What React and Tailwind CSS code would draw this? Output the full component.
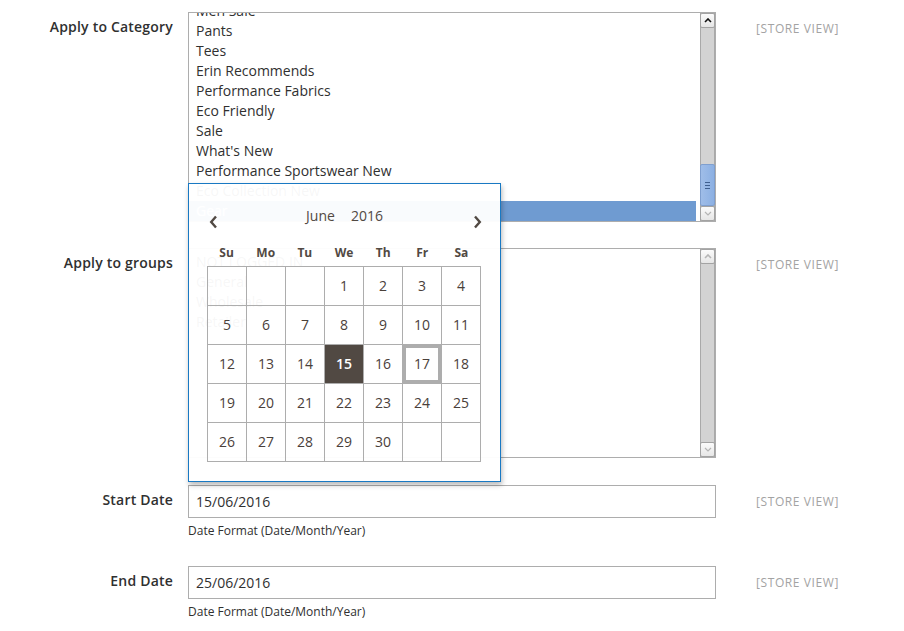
import React from 'react';

const font = { fontFamily: '"Open Sans", "DejaVu Sans", sans-serif' };

const categories = [
  'Men Sale',
  'Pants',
  'Tees',
  'Erin Recommends',
  'Performance Fabrics',
  'Eco Friendly',
  'Sale',
  "What's New",
  'Performance Sportswear New',
  'Eco Collection New',
];

const groups = ['NOT LOGGED IN', 'General', 'Wholesale', 'Retailer'];

const Chevron = ({ up, color }) => (
  <svg width="8" height="5" viewBox="0 0 8 5">
    <path d={up ? 'M1 4 L4 1 L7 4' : 'M1 1 L4 4 L7 1'} fill="none" stroke={color} strokeWidth={up ? 1.6 : 1.2} />
  </svg>
);

const ScrollBar = ({ active }) => (
  <div className="w-[15px] h-full flex flex-col bg-[#d3d3d3] border-x border-[#a9a9a9]">
    <div className="h-[15px] shrink-0 -mx-px rounded-[2px] border border-[#a3a3a3] bg-gradient-to-b from-[#fbfbfb] to-[#e6e6e6] flex items-center justify-center">
      <Chevron up color={active ? '#111' : '#b5b5b5'} />
    </div>
    <div className="flex-1" />
    {active && (
      <div className="h-[42px] shrink-0 -mx-px rounded-[2px] border border-[#7f9fcf] bg-gradient-to-r from-[#9fbde8] to-[#8cb0e3] flex flex-col items-center justify-center gap-[2px]">
        <div className="w-[5px] h-px bg-[#3f5f8f]" />
        <div className="w-[5px] h-px bg-[#3f5f8f]" />
        <div className="w-[5px] h-px bg-[#3f5f8f]" />
      </div>
    )}
    <div className="h-[15px] shrink-0 -mx-px rounded-[2px] border border-[#a3a3a3] bg-gradient-to-b from-[#fbfbfb] to-[#e6e6e6] flex items-center justify-center">
      <Chevron color="#b5b5b5" />
    </div>
  </div>
);

const StoreView = () => (
  <div className="ml-[40px] pt-[9px] text-[12px] leading-[16px] text-[#a3a3a3] tracking-[0.6px]">[STORE VIEW]</div>
);

const Label = ({ children }) => (
  <div className="w-[173px] shrink-0 text-right pt-[6px] text-[14px] leading-[18px] font-semibold tracking-[0.2px] text-[#303030]">
    {children}
  </div>
);

const Calendar = () => {
  const days = [null, null, null];
  for (let d = 1; d <= 30; d++) days.push(d);
  while (days.length < 35) days.push(null);
  return (
    <div className="absolute left-[188px] top-[183px] w-[313px] h-[299px] border border-[#1979c3] bg-white/[0.96] shadow-[1px_3px_5px_rgba(0,0,0,0.28)] z-10">
      <div className="relative h-[58px]">
        <div className="absolute left-[20px] top-[31px]">
          <svg width="9" height="14" viewBox="0 0 9 14">
            <path d="M7 1.5 L2.2 7 L7 12.5" fill="none" stroke="#514943" strokeWidth="2.4" />
          </svg>
        </div>
        <div className="absolute left-0 right-0 top-[22px] flex justify-center gap-[16px] text-[14px] leading-[20px] text-[#514943]">
          <span>June</span>
          <span>2016</span>
        </div>
        <div className="absolute left-[284px] top-[31px]">
          <svg width="9" height="14" viewBox="0 0 9 14">
            <path d="M2 1.5 L6.8 7 L2 12.5" fill="none" stroke="#514943" strokeWidth="2.4" />
          </svg>
        </div>
      </div>
      <div className="ml-[18px] w-[274px]">
        <div className="grid grid-cols-7 h-[24px] text-[12px] leading-[20px] font-bold text-[#514943] text-center">
          {['Su', 'Mo', 'Tu', 'We', 'Th', 'Fr', 'Sa'].map((d) => (
            <div key={d} className="pt-[1px]">{d}</div>
          ))}
        </div>
        <div className="grid grid-cols-7 border-l border-t border-[#adadad]">
          {days.map((d, i) => (
            <div
              key={i}
              className={
                'relative h-[39px] pb-[2px] border-r border-b border-[#adadad] flex items-center justify-center text-[14px] ' +
                (d === 15 ? 'bg-[#514943] text-white font-semibold' : 'text-[#4a403a]')
              }
            >
              {d === 17 && <div className="absolute inset-0 border-[3px] border-[#adadad]" />}
              {d && <span className="relative">{d}</span>}
            </div>
          ))}
        </div>
      </div>
    </div>
  );
};

export default function App() {
  return (
    <div className="relative w-[904px] h-[631px] bg-white overflow-hidden pt-[12px]" style={font}>
      {/* Apply to Category */}
      <div className="flex items-start">
        <Label>Apply to Category</Label>
        <div className="ml-[15px] w-[528px] h-[210px] border border-[#adadad] flex">
          <div className="flex-1 overflow-hidden">
            <div className="-mt-[12px] text-[14px] leading-[20px] text-[#303030]">
              {categories.map((c) => (
                <div key={c} className="pl-[7px] h-[20px]">{c}</div>
              ))}
              <div className="pl-[7px] h-[20px] bg-[#6f9bd1] text-white">Gear</div>
            </div>
          </div>
          <div className="w-[4px]" />
          <ScrollBar active />
        </div>
        <StoreView />
      </div>

      {/* Apply to groups */}
      <div className="flex items-start mt-[26px]">
        <Label>Apply to groups</Label>
        <div className="ml-[15px] w-[528px] h-[210px] border border-[#adadad] flex">
          <div className="flex-1 overflow-hidden pt-[3px] text-[14px] leading-[20px] text-[#303030]">
            {groups.map((g) => (
              <div key={g} className="pl-[7px] h-[20px]">{g}</div>
            ))}
          </div>
          <div className="w-[4px]" />
          <ScrollBar />
        </div>
        <StoreView />
      </div>

      {/* Start Date */}
      <div className="flex items-start mt-[27px]">
        <Label>Start Date</Label>
        <div className="ml-[15px] w-[528px]">
          <div className="h-[33px] border border-[#adadad] pl-[7px] flex items-center text-[14px] text-[#303030]">15/06/2016</div>
          <div className="mt-[4px] text-[12px] leading-[18px] text-[#303030]">Date Format (Date/Month/Year)</div>
        </div>
        <StoreView />
      </div>

      {/* End Date */}
      <div className="flex items-start mt-[26px]">
        <Label>End Date</Label>
        <div className="ml-[15px] w-[528px]">
          <div className="h-[33px] border border-[#adadad] pl-[7px] flex items-center text-[14px] text-[#303030]">25/06/2016</div>
          <div className="mt-[4px] text-[12px] leading-[18px] text-[#303030]">Date Format (Date/Month/Year)</div>
        </div>
        <StoreView />
      </div>

      <Calendar />
    </div>
  );
}
